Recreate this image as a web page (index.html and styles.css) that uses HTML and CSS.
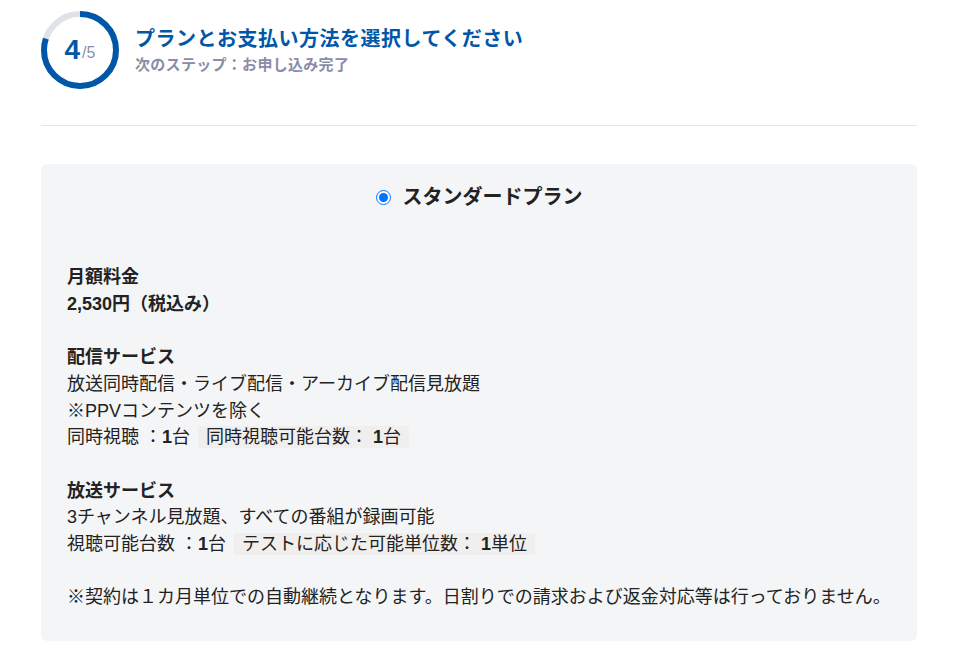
FILE: index.html
```html
<!DOCTYPE html>
<html lang="ja">
<head>
    <meta charset="UTF-8">
    <meta name="viewport" content="width=device-width, initial-scale=1.0">
    <title>プラン選択</title>
    <link rel="stylesheet" href="styles.css">
</head>
<body>
    <div class="page">
        <div class="step-header">
            <div class="step-circle">
                <svg class="step-ring" width="78" height="78" viewBox="0 0 78 78">
                    <circle cx="39" cy="39" r="36" fill="none" stroke="#dfe3e8" stroke-width="6"/>
                    <circle cx="39" cy="39" r="36" fill="none" stroke="#0057a8" stroke-width="6"
                        stroke-dasharray="180.96 226.19" transform="rotate(-90 39 39)"/>
                </svg>
                <span class="step-now">4</span><span class="step-all">/5</span>
            </div>
            <div class="step-text">
                <h1>プランとお支払い方法を選択してください</h1>
                <p>次のステップ：お申し込み完了</p>
            </div>
        </div>

        <div class="plan-card">
            <label class="plan-title">
                <input type="radio" name="plan" checked>
                <span>スタンダードプラン</span>
            </label>

            <div class="plan-body">
                <div class="plan-block">
                    <h3>月額料金</h3>
                    <p><b>2,530円（税込み）</b></p>
                </div>

                <div class="plan-block">
                    <h3>配信サービス</h3>
                    <p>放送同時配信・ライブ配信・アーカイブ配信見放題</p>
                    <p>※PPVコンテンツを除く</p>
                    <p>同時視聴 ：<b>1</b>台 <span class="tag">同時視聴可能台数： <b>1</b>台</span></p>
                </div>

                <div class="plan-block">
                    <h3>放送サービス</h3>
                    <p>3チャンネル見放題、すべての番組が録画可能</p>
                    <p>視聴可能台数 ：<b>1</b>台 <span class="tag">テストに応じた可能単位数： <b>1</b>単位</span></p>
                </div>

                <p class="note">※契約は１カ月単位での自動継続となります。日割りでの請求および返金対応等は行っておりません。</p>
            </div>
        </div>
    </div>
</body>
</html>
```

FILE: styles.css
```css
body {
    margin: 0;
    font-family: "Liberation Sans", Arial, "Noto Sans CJK JP", sans-serif;
    color: #222;
    background-color: #fff;
}

.page {
    padding: 0 42px 0 41px;
}

.step-header {
    display: flex;
    align-items: center;
    gap: 16px;
    padding: 11px 0 36px;
    border-bottom: 1px solid #e2e4e8;
}

.step-circle {
    position: relative;
    width: 78px;
    height: 78px;
    display: flex;
    align-items: center;
    justify-content: center;
    flex-shrink: 0;
}

.step-ring {
    position: absolute;
    left: 0;
    top: 0;
}

.step-now {
    font-size: 28px;
    font-weight: bold;
    color: #0057a8;
}

.step-all {
    font-size: 16px;
    color: #8a8fa8;
    margin-left: 2px;
    margin-top: 5px;
}

.step-text {
    margin-top: 2px;
}

.step-text h1 {
    margin: 0;
    font-size: 20px;
    line-height: 26px;
    letter-spacing: 0.5px;
    color: #0057a8;
}

.step-text p {
    margin: 1px 0 0;
    font-size: 15px;
    font-weight: bold;
    line-height: 24px;
    letter-spacing: 0.3px;
    color: #8a8ca8;
}

.plan-card {
    margin-top: 38px;
    background-color: #f4f5f7;
    border-radius: 6px;
    padding: 20px 26px 30px;
}

.plan-title {
    display: flex;
    justify-content: center;
    align-items: center;
    gap: 12px;
    font-size: 20px;
    font-weight: bold;
    line-height: 26px;
}

.plan-title input {
    margin: 0;
    width: 15px;
    height: 15px;
}

.plan-body {
    margin-top: 54px;
    font-size: 18px;
    line-height: 26.7px;
}

.plan-block {
    margin-bottom: 26.7px;
}

.plan-block h3 {
    margin: 0;
    font-size: 18px;
}

.plan-block p,
.note {
    margin: 0;
}

.tag {
    background-color: #f1eeee;
    padding: 1px 8px;
    margin-left: 3px;
}
```
